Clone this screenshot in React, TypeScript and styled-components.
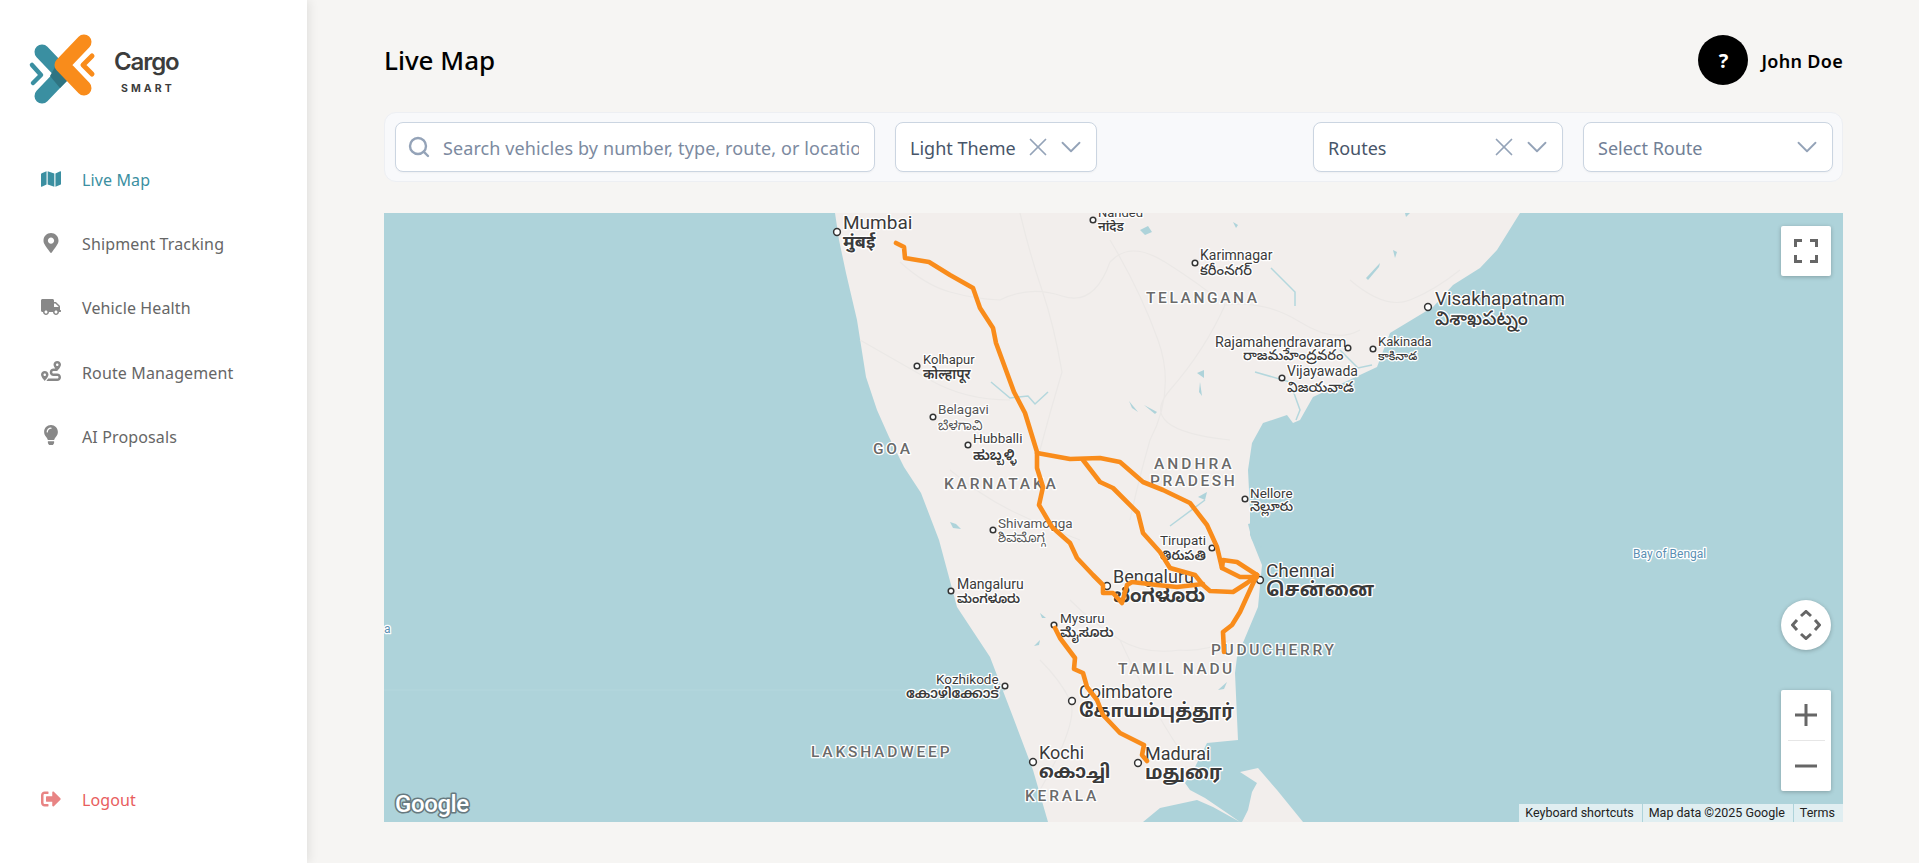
import React from "react";
import styled, { createGlobalStyle } from "styled-components";
import { FaMap, FaMapMarkerAlt, FaTruck, FaRoute, FaLightbulb, FaSignOutAlt } from "react-icons/fa";
import { Search, X, ChevronDown } from "lucide-react";

const Global = createGlobalStyle`
  html, body { margin: 0; padding: 0; height: 100%; overflow: hidden; background: #f6f5f3; }
  body { font-family: "Noto Sans", "Open Sans", sans-serif; }
  #root { height: 100%; }
`;

const Shell = styled.div`
  display: flex;
  height: 863px;
  width: 100%;
`;
const Sidebar = styled.aside`
  width: 307px;
  flex: none;
  background: #fff;
  box-shadow: 2px 0 10px rgba(0, 0, 0, 0.09);
  display: flex;
  flex-direction: column;
  padding-bottom: 47px;
  box-sizing: border-box;
`;
const LogoWrap = styled.div`
  height: 148px;
  flex: none;
`;
const Nav = styled.nav`
  display: flex;
  flex-direction: column;
  flex: 1;
`;
const NavItem = styled.a<{ $active?: boolean; $danger?: boolean }>`
  display: flex;
  align-items: center;
  height: 64.2px;
  padding-left: 38px;
  font-size: 16px;
  letter-spacing: 0.13px;
  color: ${(p) => (p.$danger ? "#e85d5d" : p.$active ? "#3b8fa1" : "#666")};
  ${(p) => p.$danger && "margin-top: auto; height: 32px;"}
`;
const NavIcon = styled.span<{ $active?: boolean; $danger?: boolean }>`
  width: 26px;
  margin-right: 18px;
  display: flex;
  justify-content: center;
  margin-top: -3px;
  font-size: 20px;
  color: ${(p) => (p.$danger ? "#e88484" : p.$active ? "#3b8fa1" : "#888")};
`;

const Main = styled.main`
  flex: 1;
  min-width: 0;
  padding: 35px 76px 0 77px;
`;
const Header = styled.header`
  display: flex;
  align-items: center;
  justify-content: space-between;
  height: 50px;
  margin-bottom: 27px;
`;
const Title = styled.h1`
  margin: 0;
  font-size: 26px;
  line-height: 32px;
  font-weight: 500;
  color: #000;
`;
const User = styled.div`
  display: flex;
  align-items: center;
  gap: 13px;
`;
const Avatar = styled.div`
  width: 50px;
  height: 50px;
  border-radius: 50%;
  background: #000;
  color: #fff;
  font-size: 20px;
  font-weight: 700;
  display: flex;
  align-items: center;
  justify-content: center;
`;
const UserName = styled.span`
  font-size: 18px;
  font-weight: 600;
  letter-spacing: 0.3px;
  color: #000;
  padding-top: 1px;
`;

const FilterBar = styled.div`
  height: 70px;
  box-sizing: border-box;
  display: flex;
  align-items: center;
  justify-content: space-between;
  padding: 0 9px 0 10px;
  background: #f8f9fb;
  border: 1px solid #edeff3;
  border-radius: 12px;
  margin-bottom: 31px;
`;
const FilterGroup = styled.div`
  display: flex;
  gap: 20px;
`;
const Field = styled.div<{ $w: number }>`
  width: ${(p) => p.$w}px;
  height: 50px;
  box-sizing: border-box;
  background: #fff;
  border: 1px solid #cbd5e1;
  border-radius: 8px;
  box-shadow: 0 1px 2px rgba(0, 0, 0, 0.04);
  display: flex;
  align-items: center;
  color: #475569;
  font-size: 18px;
  white-space: nowrap;
  overflow: hidden;
`;
const SearchField = styled(Field)`
  padding: 0 15px 0 11px;
  color: #94a3b8;
`;
const SearchInput = styled.input`
  flex: 1;
  min-width: 0;
  margin-left: 12px;
  margin-top: 1px;
  border: 0;
  outline: 0;
  padding: 0;
  background: transparent;
  font: inherit;
  font-size: 18px;
  letter-spacing: 0.1px;
  &::placeholder { color: #7c8aa0; opacity: 1; }
`;
const SelectField = styled(Field)`
  padding: 0 8px 0 14px;
`;
const SelectText = styled.span<{ $muted?: boolean }>`
  flex: 1;
  padding-top: 2px;
  color: ${(p) => (p.$muted ? "#718096" : "#475569")};
`;
const ClearIcon = styled(X)`
  color: #94a3b8;
  margin-right: 1px;
`;
const ChevIcon = styled(ChevronDown)`
  color: #94a3b8;
`;

const MapFrame = styled.section`
  position: relative;
  height: 609px;
  overflow: hidden;
  background: #aed3da;
`;
const MapSvg = styled.svg`
  display: block;
  width: 100%;
  height: 100%;
`;
const Ctl = styled.button`
  position: absolute;
  right: 12px;
  width: 50px;
  border: 0;
  padding: 0;
  background: #fff;
  box-shadow: 0 1px 4px rgba(0, 0, 0, 0.25);
  display: flex;
  align-items: center;
  justify-content: center;
`;
const FullCtl = styled(Ctl)`
  top: 13px;
  height: 50px;
  border-radius: 2px;
`;
const PanCtl = styled(Ctl)`
  top: 387px;
  height: 50px;
  border-radius: 50%;
`;
const ZoomCtl = styled(Ctl)`
  top: 477px;
  height: 101px;
  flex-direction: column;
  border-radius: 2px;
`;
const ZoomBtn = styled.span`
  height: 50px;
  width: 100%;
  display: flex;
  align-items: center;
  justify-content: center;
`;
const ZoomSep = styled.span`
  width: 37px;
  height: 1px;
  background: #e6e6e6;
`;
const Attribution = styled.div`
  position: absolute;
  right: 0;
  bottom: 0;
  height: 18px;
  display: flex;
  font-family: Roboto, "Liberation Sans", sans-serif;
  font-size: 12.5px;
  line-height: 18px;
  color: #222;
`;
const AttrCell = styled.span`
  background: rgba(255, 255, 255, 0.62);
  padding: 0 8px 0 6px;
  margin-left: 1px;
  white-space: nowrap;
`;

const Place = styled.text<{ $s: number; $w?: number; $c?: string; $ls?: number }>`
  font-family: Roboto, "Noto Sans", "Noto Sans Devanagari", "Noto Sans Kannada", "Noto Sans Telugu", "Noto Sans Tamil", "Noto Sans Malayalam", sans-serif;
  font-size: ${(p) => p.$s}px;
  font-weight: ${(p) => p.$w ?? 400};
  letter-spacing: ${(p) => p.$ls ?? 0}px;
  fill: ${(p) => p.$c ?? "#3a3a3a"};
  stroke: #fff;
  stroke-width: 2.6px;
  stroke-linejoin: round;
  paint-order: stroke;
`;
const Dot = styled.circle`
  fill: #fff;
  stroke: #333;
  stroke-width: 1.5px;
`;
const Route = styled.polyline`
  fill: none;
  stroke: #f98c1b;
  stroke-width: 4.6px;
  stroke-linejoin: round;
  stroke-linecap: round;
`;
const Faint = styled.path`
  fill: none;
  stroke: #ebe8e6;
  stroke-width: 1.2px;
  stroke-linejoin: round;
`;
const Water = styled.path`
  fill: #aed3da;
`;
const River = styled.path<{ $thin?: boolean }>`
  fill: none;
  stroke: #b4d7dd;
  stroke-width: ${(p) => (p.$thin ? 1 : 1.5)}px;
`;
const GoogleMark = styled.text`
  font-family: Roboto, "Open Sans", sans-serif;
  font-size: 24px;
  font-weight: 500;
  letter-spacing: -0.4px;
  fill: #fff;
  stroke: #67797f;
  stroke-width: 3.2px;
  stroke-linejoin: round;
  paint-order: stroke;
`;
const CargoWord = styled.text`
  font-family: Inter, sans-serif;
  font-size: 24px;
  font-weight: 600;
  letter-spacing: -1.1px;
  fill: #3c3c3c;
`;
const SmartWord = styled.text`
  font-family: Inter, sans-serif;
  font-size: 10.5px;
  font-weight: 700;
  letter-spacing: 3.1px;
  fill: #3c3c3c;
`;

type L = [string, number, number, number?, number?, string?, number?];
const G = "#6a6a6a";
const labels: L[] = [
  ["Mumbai", 843, 229, 19],
  ["मुंबई", 843, 248, 18, 700],
  ["Nanded", 1098, 217, 13],
  ["नांदेड", 1098, 231, 13, 600],
  ["Karimnagar", 1200, 260, 14],
  ["కరీంనగర్", 1200, 275, 14.5, 500],
  ["TELANGANA", 1146, 303, 15.5, 500, G, 2.6],
  ["Rajamahendravaram", 1215, 347, 14.3],
  ["రాజమహేంద్రవరం", 1243, 360, 14.5, 500],
  ["Kakinada", 1378, 346, 13],
  ["కాకినాడ", 1378, 360, 12, 500],
  ["Vijayawada", 1287, 376, 14],
  ["విజయవాడ", 1287, 392, 14.5, 500],
  ["Visakhapatnam", 1435, 305, 18.7],
  ["విశాఖపట్నం", 1435, 325, 19.5, 500],
  ["Kolhapur", 923, 364, 13],
  ["कोल्हापूर", 923, 379, 14, 600],
  ["Belagavi", 938, 414, 13.5, 400, "#555"],
  ["ಬೆಳಗಾವಿ", 938, 430, 13, 400, "#555"],
  ["Hubballi", 973, 443, 13.5],
  ["ಹುಬ್ಬಳ್ಳಿ", 973, 460, 14, 600],
  ["GOA", 873, 454, 15.5, 500, G, 2.8],
  ["KARNATAKA", 944, 489, 15.5, 500, G, 2.8],
  ["ANDHRA", 1154, 469, 15.5, 500, G, 3],
  ["PRADESH", 1150, 486, 15.5, 500, G, 2.6],
  ["Nellore", 1250, 498, 13.5],
  ["నెల్లూరు", 1250, 511, 14, 500],
  ["Shivamogga", 998, 528, 13.5, 400, "#555"],
  ["ಶಿವಮೊಗ್ಗ", 998, 542, 13, 400, "#555"],
  ["Tirupati", 1160, 545, 13.5],
  ["తిరుపతి", 1160, 560, 13.5, 600],
  ["Chennai", 1266, 577, 19],
  ["சென்னை", 1266, 596, 18.8, 700],
  ["Bengaluru", 1113, 583, 18],
  ["ಬೆಂಗಳೂರು", 1113, 602, 19, 700],
  ["Mangaluru", 957, 589, 14],
  ["ಮಂಗಳೂರು", 957, 603, 12.5, 600],
  ["Mysuru", 1060, 623, 13.5],
  ["ಮೈಸೂರು", 1060, 637, 13.5, 600],
  ["PUDUCHERRY", 1211, 655, 15.5, 500, G, 2.7],
  ["TAMIL NADU", 1118, 674, 15.5, 500, G, 2.6],
  ["Kozhikode", 936, 684, 13.5],
  ["കോഴിക്കോട്", 906, 698, 14, 600],
  ["Coimbatore", 1079, 698, 18],
  ["கோயம்புத்தூர்", 1079, 717, 18.5, 700],
  ["Kochi", 1039, 759, 18],
  ["കൊച്ചി", 1039, 778, 18.7, 700],
  ["Madurai", 1145, 760, 18],
  ["மதுரை", 1145, 779, 18.7, 700],
  ["LAKSHADWEEP", 811, 757, 15.5, 500, G, 2.8],
  ["KERALA", 1025, 801, 15.5, 500, G, 2.8],
];
const dots: [number, number, number?][] = [
  [837, 232, 3.4], [1093, 220], [1195, 263], [1348, 348], [1373, 349], [1282, 378], [1428, 307, 3.4],
  [917, 366], [933, 417], [968, 445], [1245, 499], [993, 530], [1212, 548], [1260, 580, 3.4],
  [1107, 586, 3.4], [951, 591], [1054, 625], [1005, 686], [1072, 701, 3.4], [1033, 762, 3.4], [1138, 763, 3.4],
];
const routes = [
  "896,243 904,247 905,258 929,262 950,275 973,288 980,308 993,328 996,343 1014,392 1025,413 1037,452",
  "1037,453 1037,468 1043,487 1039,505 1052,527 1070,543 1077,558 1093,575 1103,585 1103,593 1113,593 1122,603 1127,585 1132,582 1157,585 1177,587 1203,584",
  "1037,453 1070,459 1100,458 1120,462 1143,482 1163,490 1190,503 1207,525 1217,547 1222,568 1240,577 1257,577",
  "1222,568 1223,560 1237,562 1257,575",
  "1083,460 1100,482 1113,488 1138,513 1143,533 1160,552 1170,568 1195,575 1203,585 1210,591 1233,592 1247,583 1257,575",
  "1257,575 1250,590 1240,612 1232,625 1223,632 1224,652",
  "1055,628 1060,638 1075,658 1074,669 1083,673 1087,687 1097,700 1103,715 1120,733 1144,745 1142,755 1147,761",
];
const LAND =
  "M835 213 L839 240 L846 273 L857 320 L866 377 L877 410 L889 437 L904 467 L921 493 L939 540 L957 607 L990 657 L1013 717 L1033 770 L1048 822 L1143 822 L1160 808 L1197 800 L1213 807 L1240 822 L1230 815 L1205 798 L1190 790 L1185 783 L1195 767 L1207 743 L1238 740 L1235 673 L1237 657 L1258 607 L1262 565 L1250 535 L1250 510 L1248 470 L1252 443 L1263 423 L1287 415 L1293 423 L1300 420 L1313 397 L1377 367 L1390 333 L1433 307 L1453 285 L1480 268 L1497 250 L1520 213 Z";
const LANKA = "M1240 772 L1258 768 L1277 790 L1303 822 L1242 822 L1248 810 L1252 792 L1257 783 Z";

export default function App() {
  return (
    <Shell>
      <Global />
      <Sidebar>
        <LogoWrap>
          <svg width="200" height="120" viewBox="0 0 200 120">
            <path d="M42 52 L63 74 L42 96" fill="none" stroke="#3a8fa1" strokeWidth="15" strokeLinecap="round" strokeLinejoin="round" />
            <path d="M32 65 L41 75 L33 83" fill="none" stroke="#3a8fa1" strokeWidth="4.5" strokeLinecap="round" strokeLinejoin="round" />
            <path d="M55 67 L68 80 L60 88 L50 76 Z" fill="#2f7482" />
            <path d="M84 42 L62 65 L84 88" fill="none" stroke="#f98c1b" strokeWidth="15" strokeLinecap="round" strokeLinejoin="round" />
            <path d="M92 56 L83 65 L92 74" fill="none" stroke="#f98c1b" strokeWidth="5" strokeLinecap="round" strokeLinejoin="round" />
            <CargoWord x="114" y="70">Cargo</CargoWord>
            <SmartWord x="121" y="92">SMART</SmartWord>
          </svg>
        </LogoWrap>
        <Nav>
          <NavItem $active><NavIcon $active><FaMap /></NavIcon>Live Map</NavItem>
          <NavItem><NavIcon><FaMapMarkerAlt /></NavIcon>Shipment Tracking</NavItem>
          <NavItem><NavIcon><FaTruck /></NavIcon>Vehicle Health</NavItem>
          <NavItem><NavIcon><FaRoute /></NavIcon>Route Management</NavItem>
          <NavItem><NavIcon><FaLightbulb /></NavIcon>AI Proposals</NavItem>
          <NavItem $danger><NavIcon $danger><FaSignOutAlt /></NavIcon>Logout</NavItem>
        </Nav>
      </Sidebar>
      <Main>
        <Header>
          <Title>Live Map</Title>
          <User>
            <Avatar>?</Avatar>
            <UserName>John Doe</UserName>
          </User>
        </Header>
        <FilterBar>
          <FilterGroup>
            <SearchField $w={480}>
              <Search size={24} strokeWidth={2.4} />
              <SearchInput readOnly placeholder="Search vehicles by number, type, route, or location" />
            </SearchField>
            <SelectField $w={202}>
              <SelectText>Light Theme</SelectText>
              <ClearIcon size={30} strokeWidth={1.4} />
              <ChevIcon size={34} strokeWidth={1.3} />
            </SelectField>
          </FilterGroup>
          <FilterGroup>
            <SelectField $w={250}>
              <SelectText>Routes</SelectText>
              <ClearIcon size={30} strokeWidth={1.4} />
              <ChevIcon size={34} strokeWidth={1.3} />
            </SelectField>
            <SelectField $w={250}>
              <SelectText $muted>Select Route</SelectText>
              <ChevIcon size={34} strokeWidth={1.3} />
            </SelectField>
          </FilterGroup>
        </FilterBar>
        <MapFrame>
          <MapSvg viewBox="384 213 1459 609" preserveAspectRatio="none">
            <path d={LAND} fill="#f2eeec" />
            <path d={LANKA} fill="#f2eeec" />
            <Faint d="M900 262 Q925 285 950 292 T1000 300 Q1030 285 1062 296 T1110 262 Q1130 240 1165 262 T1225 305 Q1265 300 1300 322 T1360 330 M1020 213 Q1030 255 1042 290 T1062 372 Q1050 412 1040 450 M1110 240 Q1140 290 1158 340 T1150 440 Q1138 482 1130 520 M1225 305 Q1205 350 1170 390 T1230 440 M1070 600 Q1095 625 1120 640 T1180 650 Q1205 652 1230 640 M1040 660 Q1060 680 1070 700 T1040 790 M1120 640 Q1135 672 1150 700 T1180 750 M950 470 Q980 495 1010 510 T1080 540 M860 340 Q895 360 930 380 T1010 400 M1460 270 Q1435 290 1410 300 T1350 280" />
            <Water d="M1140 230 L1148 226 L1152 232 L1145 235 Z" />
            <Water d="M1233 222 L1238 225 L1236 228 Z" />
            <Water d="M1366 278 L1380 263 L1379 267 L1368 280 Z" />
            <Water d="M1393 250 L1395 258 L1397 252 Z" />
            <Water d="M1405 213 L1410 213 L1406 217 Z" />
            <Water d="M1197 373 L1204 370 L1204 378 Z" />
            <Water d="M1200 382 L1202 396 L1199 392 Z" />
            <Water d="M1129 401 L1138 412 L1132 408 Z" />
            <Water d="M1144 405 L1157 412 L1155 414 Z" />
            <Water d="M1198 497 L1207 492 L1205 500 Z" />
            <Water d="M1248 524 L1256 522 L1262 548 L1252 540 Z" />
            <Water d="M950 522 L956 524 L961 529 L953 528 Z" />
            <Water d="M1040 613 L1046 618 L1042 618 Z" />
            <Water d="M1034 646 L1040 640 L1039 645 Z" />
            <Water d="M1218 690 L1227 682 L1224 689 Z" />
            <River d="M1271 268 L1295 292 L1295 306 M991 382 L1010 398 L1028 396 L1035 404 L1048 392 M1255 372 L1290 382 L1300 410 L1296 420 M1340 350 L1358 368 L1372 365 M1170 526 L1205 500" />
            <River $thin d="M384 690 L1005 690" />
            {labels.map(([t, x, y, s, w, c, ls]) => (
              <Place key={t} x={x} y={y} $s={s ?? 13} $w={w} $c={c} $ls={ls}>{t}</Place>
            ))}
            {dots.map(([x, y, r]) => <Dot key={x} cx={x} cy={y} r={r ?? 2.8} />)}
            {routes.map((r) => <Route key={r} points={r} />)}
            <Place x={1633} y={558} $s={12} $c="#5b8fb3">Bay of Bengal</Place>
            <Place x={384} y={633} $s={12} $c="#5b8fb3">a</Place>
            <GoogleMark x={395} y={812}>Google</GoogleMark>
          </MapSvg>
          <FullCtl aria-label="Fullscreen">
            <svg width="24" height="24" viewBox="0 0 24 24" fill="none" stroke="#666" strokeWidth="3">
              <path d="M1.5 8V1.5H8M16 1.5H22.5V8M1.5 16V22.5H8M16 22.5H22.5V16" />
            </svg>
          </FullCtl>
          <PanCtl aria-label="Pan">
            <svg width="30" height="30" viewBox="0 0 30 30" fill="none" stroke="#666" strokeWidth="3">
              <path d="M10 6 L15 1.5 L20 6 M10 24 L15 28.5 L20 24 M6 10 L1.5 15 L6 20 M24 10 L28.5 15 L24 20" />
            </svg>
          </PanCtl>
          <ZoomCtl aria-label="Zoom">
            <ZoomBtn>
              <svg width="22" height="22" viewBox="0 0 22 22" stroke="#666" strokeWidth="3"><path d="M11 0V22M0 11H22" /></svg>
            </ZoomBtn>
            <ZoomSep />
            <ZoomBtn>
              <svg width="22" height="22" viewBox="0 0 22 22" stroke="#666" strokeWidth="3"><path d="M0 11H22" /></svg>
            </ZoomBtn>
          </ZoomCtl>
          <Attribution>
            <AttrCell>Keyboard shortcuts</AttrCell>
            <AttrCell>Map data ©2025 Google</AttrCell>
            <AttrCell>Terms</AttrCell>
          </Attribution>
        </MapFrame>
      </Main>
    </Shell>
  );
}
